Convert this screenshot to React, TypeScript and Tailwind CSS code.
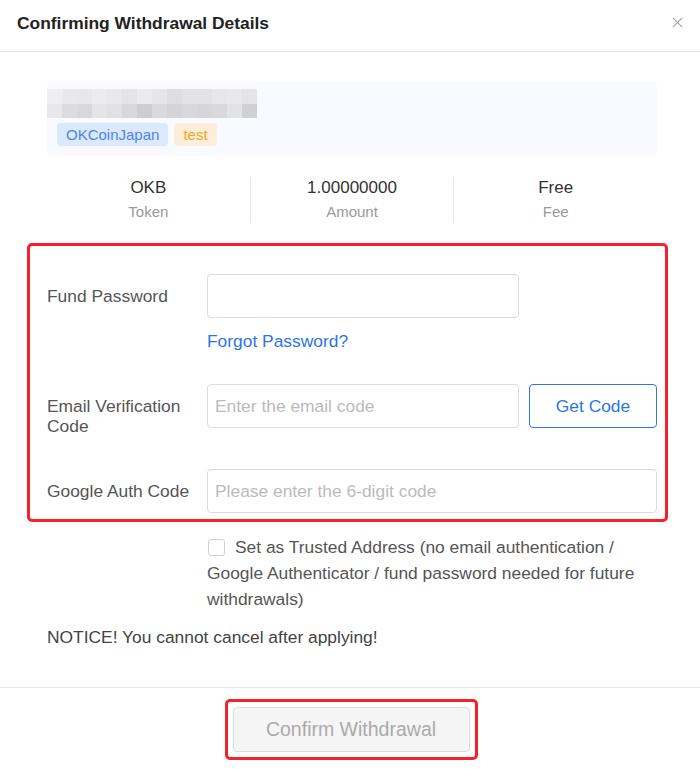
import { X } from 'lucide-react';

const blurRows = [
  ['#efeff2', '#e9e9ec', '#e8e8ec', '#ececef', '#e9e9ed', '#e4e4e8', '#ebebee', '#e6e6ea', '#dedee2', '#e3e3e7', '#e3e3e7', '#e7e7ea', '#e9e9ec', '#e4e4e8'],
  ['#e8e8eb', '#dcdce0', '#d8d8dc', '#e5e5e8', '#e1e1e5', '#d8d8dc', '#cdcdd2', '#dadade', '#d3d3d8', '#d8d8dc', '#d5d5da', '#d9d9dd', '#e3e3e7', '#d0d0d4'],
];

function Stat({ value, label, last }: { value: string; label: string; last?: boolean }) {
  return (
    <div className={`flex-1 flex flex-col items-center ${last ? '' : 'border-r border-[#e8e8e8]'}`}>
      <span className="text-[17px] leading-[22px] text-[#333]">{value}</span>
      <span className="text-[15px] leading-[22px] text-[#999] mt-[2px]">{label}</span>
    </div>
  );
}

export default function App() {
  return (
    <div className="w-[700px] h-[769px] bg-white font-['Liberation_Sans',Arial,sans-serif] text-[#333] overflow-hidden">
      <div className="h-[52px] px-[17px] pt-[13px] flex items-start justify-between border-b border-[#e8e8e8]">
        <h1 className="text-[17.4px] leading-[20px] font-bold text-[#222]">Confirming Withdrawal Details</h1>
        <X className="w-[17px] h-[17px] text-[#aaa] mr-[-3px] mt-[1px]" strokeWidth={1.5} />
      </div>

      <div className="px-[47px] pr-[43px]">
        <div className="mt-[30px] h-[74px] rounded-[4px] bg-[#f8faff] pt-[7px]">
          <div className="flex flex-col w-[210px]">
            {blurRows.map((row, i) => (
              <div key={i} className="flex">
                {row.map((c, j) => (
                  <div key={j} className="w-[15px] h-[14.5px]" style={{ background: c }} />
                ))}
              </div>
            ))}
          </div>
          <div className="flex gap-[6px] ml-[10px] mt-[5px]">
            <span className="h-[23px] px-[9px] rounded-[4px] bg-[#dce8fc] text-[#4a87ec] text-[15px] leading-[23px]">OKCoinJapan</span>
            <span className="h-[23px] px-[9px] rounded-[4px] bg-[#fcefd9] text-[#f5a41d] text-[15px] leading-[23px]">test</span>
          </div>
        </div>

        <div className="mt-[21px] flex h-[46px]">
          <Stat value="OKB" label="Token" />
          <Stat value="1.00000000" label="Amount" />
          <Stat value="Free" label="Fee" last />
        </div>
      </div>

      <div className="mt-[20px] ml-[27px] w-[641px] h-[279px] border-[3px] border-[#f5222d] rounded-[5px] pl-[17px] pr-[7px] pt-[28px] text-[17.4px]">
        <div className="flex items-center h-[44px]">
          <label className="w-[160px] text-[#555]">Fund Password</label>
          <input className="w-[312px] h-[44px] border border-[#dcdcdc] rounded-[4px] px-[7px] outline-none" />
        </div>
        <div className="ml-[160px] mt-[13px] leading-[20px] text-[#2d74e8]">Forgot Password?</div>

        <div className="flex items-start h-[44px] mt-[33px]">
          <label className="w-[160px] mt-[12px] leading-[20px] text-[#555]">Email Verification<br />Code</label>
          <input
            placeholder="Enter the email code"
            className="w-[312px] h-[44px] border border-[#dcdcdc] rounded-[4px] px-[7px] outline-none placeholder:text-[#bbb]"
          />
          <button className="ml-[10px] w-[128px] h-[44px] border border-[#2d74e8] rounded-[4px] text-[#2d74e8] bg-white">Get Code</button>
        </div>

        <div className="flex items-center h-[44px] mt-[41px]">
          <label className="w-[160px] text-[#555]">Google Auth Code</label>
          <input
            placeholder="Please enter the 6-digit code"
            className="w-[450px] h-[44px] border border-[#dcdcdc] rounded-[4px] px-[7px] outline-none placeholder:text-[#bbb]"
          />
        </div>
      </div>

      <div className="ml-[207px] mr-[40px] mt-[12px] text-[17.4px] leading-[26px] text-[#555]">
        <span className="inline-block align-[-3px] w-[17px] h-[17px] border border-[#d0d0d0] rounded-[3px] mr-[10px] ml-[1px]" />
        Set as Trusted Address (no email authentication / Google Authenticator / fund password needed for future withdrawals)
      </div>

      <div className="ml-[47px] mt-[12px] text-[17.4px] leading-[26px] text-[#444]">NOTICE! You cannot cancel after applying!</div>

      <div className="mt-[37px] border-t border-[#e8e8e8] flex justify-center pt-[11px]">
        <div className="border-[3px] border-[#f5222d] rounded-[5px] p-[5px] ml-[2px]">
          <button className="w-[237px] h-[45px] bg-[#f5f5f5] border border-[#dcdcdc] rounded-[4px] text-[19.5px] text-[#aaa]">Confirm Withdrawal</button>
        </div>
      </div>
    </div>
  );
}
